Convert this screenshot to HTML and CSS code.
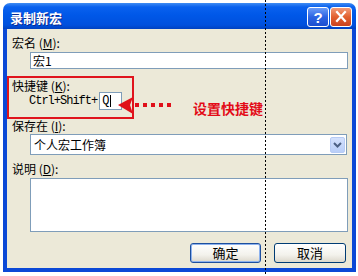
FILE: index.html
```html
<!DOCTYPE html>
<html lang="zh-CN">

<head>
    <meta charset="UTF-8">
    <meta name="viewport" content="width=device-width, initial-scale=1.0">
    <title>录制新宏</title>
    <link rel="stylesheet" href="styles.css">
</head>

<body>
    <div class="screen">
        <div class="dialog">
            <div class="titlebar">
                <span class="title">录制新宏</span>
                <div class="title-buttons">
                    <span class="tb-btn help">?</span>
                    <span class="tb-btn close">
                        <svg width="20" height="18" viewBox="0 0 20 18">
                            <path d="M6 4 L14 13 M14 4 L6 13" stroke="#fff" stroke-width="2.2" stroke-linecap="square" />
                        </svg>
                    </span>
                </div>
            </div>

            <div class="client">
                <div class="label">宏名 (<u>M</u>):</div>
                <div class="field name">宏1</div>

                <div class="label shortcut-label">快捷键 (<u>K</u>):</div>
                <div class="shortcut-row">
                    <span class="mono">Ctrl+Shift+</span>
                    <span class="field key">Q<span class="caret"></span></span>
                </div>

                <div class="label store-label">保存在 (<u>I</u>):</div>
                <div class="field select">
                    <span>个人宏工作簿</span>
                    <span class="drop">
                        <svg width="13" height="14" viewBox="0 0 13 14">
                            <polyline points="3,5 6.5,8.5 10,5" fill="none" stroke="#4D6185" stroke-width="2" />
                        </svg>
                    </span>
                </div>

                <div class="label desc-label">说明 (<u>D</u>):</div>
                <div class="field textarea"></div>

                <div class="buttons">
                    <button class="btn default">确定</button>
                    <button class="btn cancel">取消</button>
                </div>
            </div>
        </div>

        <!-- annotation drawn over the screenshot -->
        <div class="note-box"></div>
        <svg class="note-arrow" width="60" height="24" viewBox="0 0 60 24">
            <path d="M2 10 L17 2 L14 10 L17 19 Z" fill="#E0101A" />
            <rect x="19" y="8" width="4" height="4" fill="#E0101A" />
            <rect x="27" y="8" width="4" height="4" fill="#E0101A" />
            <rect x="35" y="8" width="4" height="4" fill="#E0101A" />
            <rect x="43" y="8" width="4" height="4" fill="#E0101A" />
            <rect x="51" y="8" width="4" height="4" fill="#E0101A" />
        </svg>
        <div class="note-text">设置快捷键</div>
        <div class="guide-line"></div>
    </div>
</body>

</html>
```

FILE: styles.css
```css
* {
    box-sizing: border-box;
}

body {
    margin: 0;
    background: #fff;
    font-family: "Noto Sans CJK SC", sans-serif;
    font-size: 12px;
    color: #000;
}

.screen {
    position: relative;
    width: 358px;
    height: 276px;
    padding: 3px 0 0 3px;
    overflow: hidden;
}

.dialog {
    width: 353px;
    height: 269px;
    display: flex;
    flex-direction: column;
    border-radius: 7px 7px 0 0;
    overflow: hidden;
}

/* title bar */
.titlebar {
    height: 26px;
    flex: none;
    display: flex;
    align-items: center;
    justify-content: space-between;
    padding: 0 4px 0 7px;
    background: linear-gradient(to bottom, #3F8CF3 0, #0A61EE 4px, #0058E8 45%, #0050DD 85%, #0041C0 100%);
}

.title {
    margin-top: 2px;
    color: #fff;
    font-size: 13px;
    font-weight: 700;
    text-shadow: 1px 1px 0 #0A2A90;
}

.title-buttons {
    display: flex;
    gap: 1px;
    margin-top: 2px;
}

.tb-btn {
    width: 22px;
    height: 20px;
    display: flex;
    align-items: center;
    justify-content: center;
    border: 1px solid #fff;
    border-radius: 3px;
}

.help {
    background: linear-gradient(to bottom, #6A9CF8, #2C64E2 50%, #1B4ED0);
    color: #fff;
    font-family: "Liberation Sans", sans-serif;
    font-size: 15px;
    font-weight: 700;
}

.close {
    background: linear-gradient(to bottom, #F29A78, #E2602F 50%, #C9421F);
}

/* dialog body */
.client {
    flex: 1;
    background: #ECE9D8;
    border: 4px solid #0B48D6;
    border-top: 0;
    padding: 7px 4px 0 5px;
}

.label {
    line-height: 14px;
}

.field {
    background: #fff;
    border: 1px solid #7F9DB9;
    margin-left: 18px;
}

.name {
    width: 318px;
    height: 17px;
    margin-top: 2px;
    padding: 0 2px;
    line-height: 15px;
}

.shortcut-label {
    margin-top: 10px;
    line-height: 13px;
}

.shortcut-row {
    height: 18px;
    display: flex;
    align-items: center;
    margin-left: 17px;
}

.mono {
    font-family: "Liberation Mono", monospace;
    font-size: 12px;
    letter-spacing: -1px;
}

.key {
    width: 23px;
    height: 18px;
    margin-left: 2px;
    padding-left: 2px;
    display: flex;
    align-items: center;
    font-family: "Liberation Mono", monospace;
    font-size: 12px;
}

.caret {
    width: 1px;
    height: 12px;
    margin-left: 1px;
    background: #000;
}

.store-label {
    margin-top: 9px;
}

.select {
    width: 317px;
    height: 21px;
    margin-top: 1px;
    padding: 0 1px 0 3px;
    display: flex;
    align-items: center;
    justify-content: space-between;
}

.drop {
    width: 15px;
    height: 16px;
    display: flex;
    align-items: center;
    justify-content: center;
    border: 1px solid #B7CBF5;
    border-radius: 2px;
    background: linear-gradient(to bottom, #D4E1FD, #B9CEF8);
}

.desc-label {
    margin-top: 7px;
}

.textarea {
    width: 318px;
    height: 54px;
    margin-top: 2px;
}

.buttons {
    display: flex;
    justify-content: flex-end;
    gap: 13px;
    margin-top: 11px;
    margin-right: 2px;
}

.btn {
    width: 71px;
    height: 20px;
    padding: 0;
    border: 1px solid #003C74;
    border-radius: 3px;
    background: linear-gradient(to bottom, #FFFFFF, #F3F2EC 60%, #DCD8CC);
    font-family: "Noto Sans CJK SC", sans-serif;
    font-size: 13px;
    line-height: 18px;
    color: #000;
}

.btn.default {
    border-color: #1D4F9E;
    box-shadow: inset 0 0 0 1px #8DB2EE;
}

.btn.cancel {
    width: 72px;
}

/* annotation overlay */
.note-box {
    position: absolute;
    left: 7px;
    top: 76px;
    width: 127px;
    height: 43px;
    border: 2px solid #E0141C;
}

.note-arrow {
    position: absolute;
    left: 116px;
    top: 95px;
}

.note-text {
    position: absolute;
    left: 193px;
    top: 101px;
    color: #E30B17;
    font-size: 14px;
    font-weight: 700;
    line-height: 14px;
}

.guide-line {
    position: absolute;
    left: 265px;
    top: 0;
    width: 1px;
    height: 276px;
    background: repeating-linear-gradient(to bottom, #000 0, #000 2px, transparent 2px, transparent 4px);
}
```
